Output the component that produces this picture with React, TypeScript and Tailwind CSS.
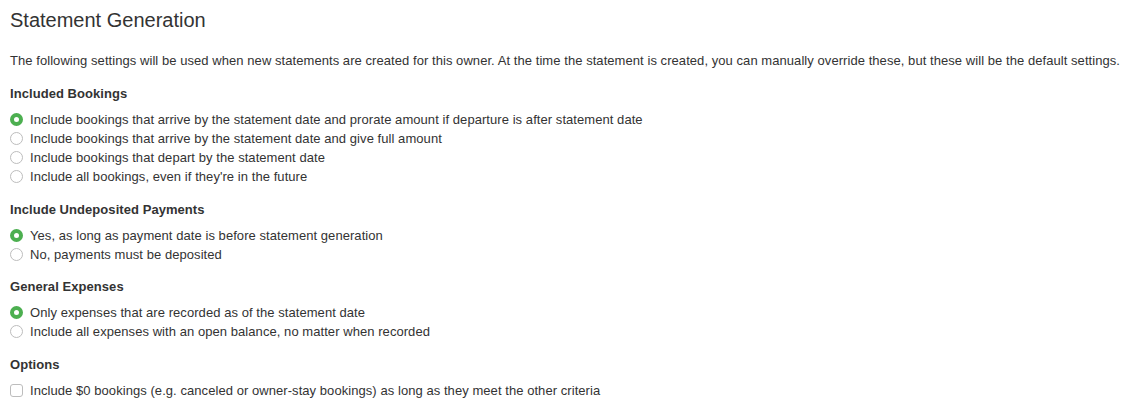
import React from "react";

function Radio({ checked, label }: { checked?: boolean; label: string }) {
  return (
    <div className="flex items-center h-[19px]">
      <span
        className={
          checked
            ? "w-[13px] h-[13px] rounded-full border-[4px] border-[#4caf50] bg-white shrink-0"
            : "w-[13px] h-[13px] rounded-full border border-[#bdbdbd] bg-white shrink-0"
        }
      />
      <span className="ml-[7px]">{label}</span>
    </div>
  );
}

function Section({ title, first, children }: { title: string; first?: boolean; children: React.ReactNode }) {
  return (
    <div className={first ? "mt-[14px]" : "mt-[13.5px]"}>
      <div className="font-bold h-[19px] leading-[19px]">{title}</div>
      <div className="mt-[7px]">{children}</div>
    </div>
  );
}

export default function App() {
  return (
    <div
      className="pl-[10px] pt-[8px] text-[13px] leading-[19px] tracking-[0.06px] text-[#333333] bg-white min-h-[406px]"
      style={{ fontFamily: '"Liberation Sans", Arial, sans-serif' }}
    >
      <h1 className="text-[20px] leading-[24px] font-normal tracking-normal">Statement Generation</h1>
      <p className="mt-[19px]">
        The following settings will be used when new statements are created for this owner. At the time the statement is created, you can manually override these, but these will be the default settings.
      </p>
      <Section first title="Included Bookings">
        <Radio checked label="Include bookings that arrive by the statement date and prorate amount if departure is after statement date" />
        <Radio label="Include bookings that arrive by the statement date and give full amount" />
        <Radio label="Include bookings that depart by the statement date" />
        <Radio label="Include all bookings, even if they're in the future" />
      </Section>
      <Section title="Include Undeposited Payments">
        <Radio checked label="Yes, as long as payment date is before statement generation" />
        <Radio label="No, payments must be deposited" />
      </Section>
      <Section title="General Expenses">
        <Radio checked label="Only expenses that are recorded as of the statement date" />
        <Radio label="Include all expenses with an open balance, no matter when recorded" />
      </Section>
      <Section title="Options">
        <div className="flex items-center h-[19px]">
          <span className="w-[13px] h-[13px] rounded-[3px] border border-[#bdbdbd] bg-white shrink-0" />
          <span className="ml-[7px]">Include $0 bookings (e.g. canceled or owner-stay bookings) as long as they meet the other criteria</span>
        </div>
      </Section>
    </div>
  );
}
